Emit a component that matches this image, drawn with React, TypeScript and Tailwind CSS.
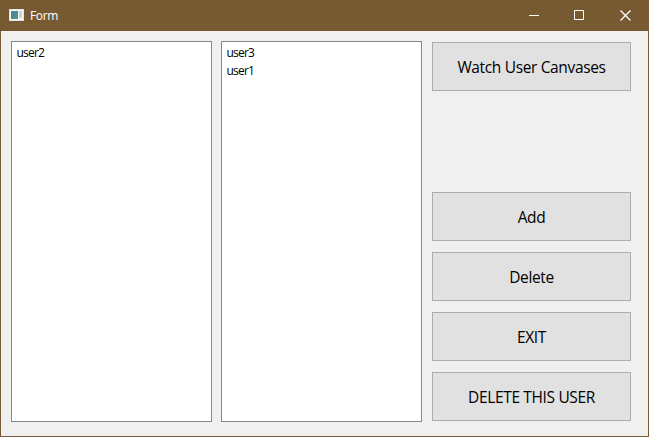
function TitleBar() {
  return (
    <header className="flex h-[31px] shrink-0 items-center bg-[#785a32] pr-px text-white">
      <svg className="-mt-px ml-[9px]" width="15" height="12" viewBox="0 0 15 12">
        <defs>
          <linearGradient id="pane" x1="0" y1="0" x2="1" y2="1">
            <stop offset="0" stopColor="#4a7fa8" />
            <stop offset="1" stopColor="#4f9a78" />
          </linearGradient>
        </defs>
        <rect width="15" height="12" fill="#dfe3e6" />
        <rect x="1" y="1" width="13" height="10" fill="#f6f8f9" />
        <rect x="2" y="2" width="7" height="8" fill="url(#pane)" />
        <rect x="10" y="2" width="3" height="7" fill="#c4d6dc" />
      </svg>
      <span className="ml-1.5 text-[12px] leading-4 tracking-[-0.35px]">Form</span>
      <div className="ml-auto flex h-full">
        {["min", "max", "close"].map((k) => (
          <button key={k} aria-label={k} className="flex w-[46px] items-center justify-center">
            <svg width="11" height="11" viewBox="0 0 11 11" fill="none" stroke="white">
              {k === "min" && <path d="M1 5.5h10" />}
              {k === "max" && <path d="M.5.5h9v9h-9z" />}
              {k === "close" && <path d="M.5.5l10 10M10.500.5l-10 10" strokeWidth="1.3" />}
            </svg>
          </button>
        ))}
      </div>
    </header>
  );
}

function UserList({ users }: { users: string[] }) {
  return (
    <ul className="h-[381px] w-[201px] border border-[#828790] bg-white pl-[4.5px] pt-[2px] text-[12px] leading-[18px] tracking-[-0.8px]">
      {users.map((u) => (
        <li key={u}>{u}</li>
      ))}
    </ul>
  );
}

function PushButton({ label }: { label: string }) {
  return (
    <button className="flex h-[49px] w-[199px] items-center justify-center border border-[#adadad] bg-[#e1e1e1] pt-[2px] text-[15.5px] tracking-[-0.35px]">
      <span>{label}</span>
    </button>
  );
}

export default function App() {
  return (
    <div className="flex h-[437px] w-[649px] flex-col bg-[#f0f0f0] font-['Open_Sans','Noto_Sans',sans-serif] text-black">
      <TitleBar />
      <main className="flex flex-1 border-x border-b border-[#785a32] pl-[10px] pt-[10px]">
        <UserList users={["user2"]} />
        <div className="w-[9px]" />
        <UserList users={["user3", "user1"]} />
        <div className="ml-[10px] mt-px flex flex-col">
          <PushButton label="Watch User Canvases" />
          <div className="mt-[101px] flex flex-col gap-[11px]">
            <PushButton label="Add" />
            <PushButton label="Delete" />
            <PushButton label="EXIT" />
            <PushButton label="DELETE THIS USER" />
          </div>
        </div>
      </main>
    </div>
  );
}
